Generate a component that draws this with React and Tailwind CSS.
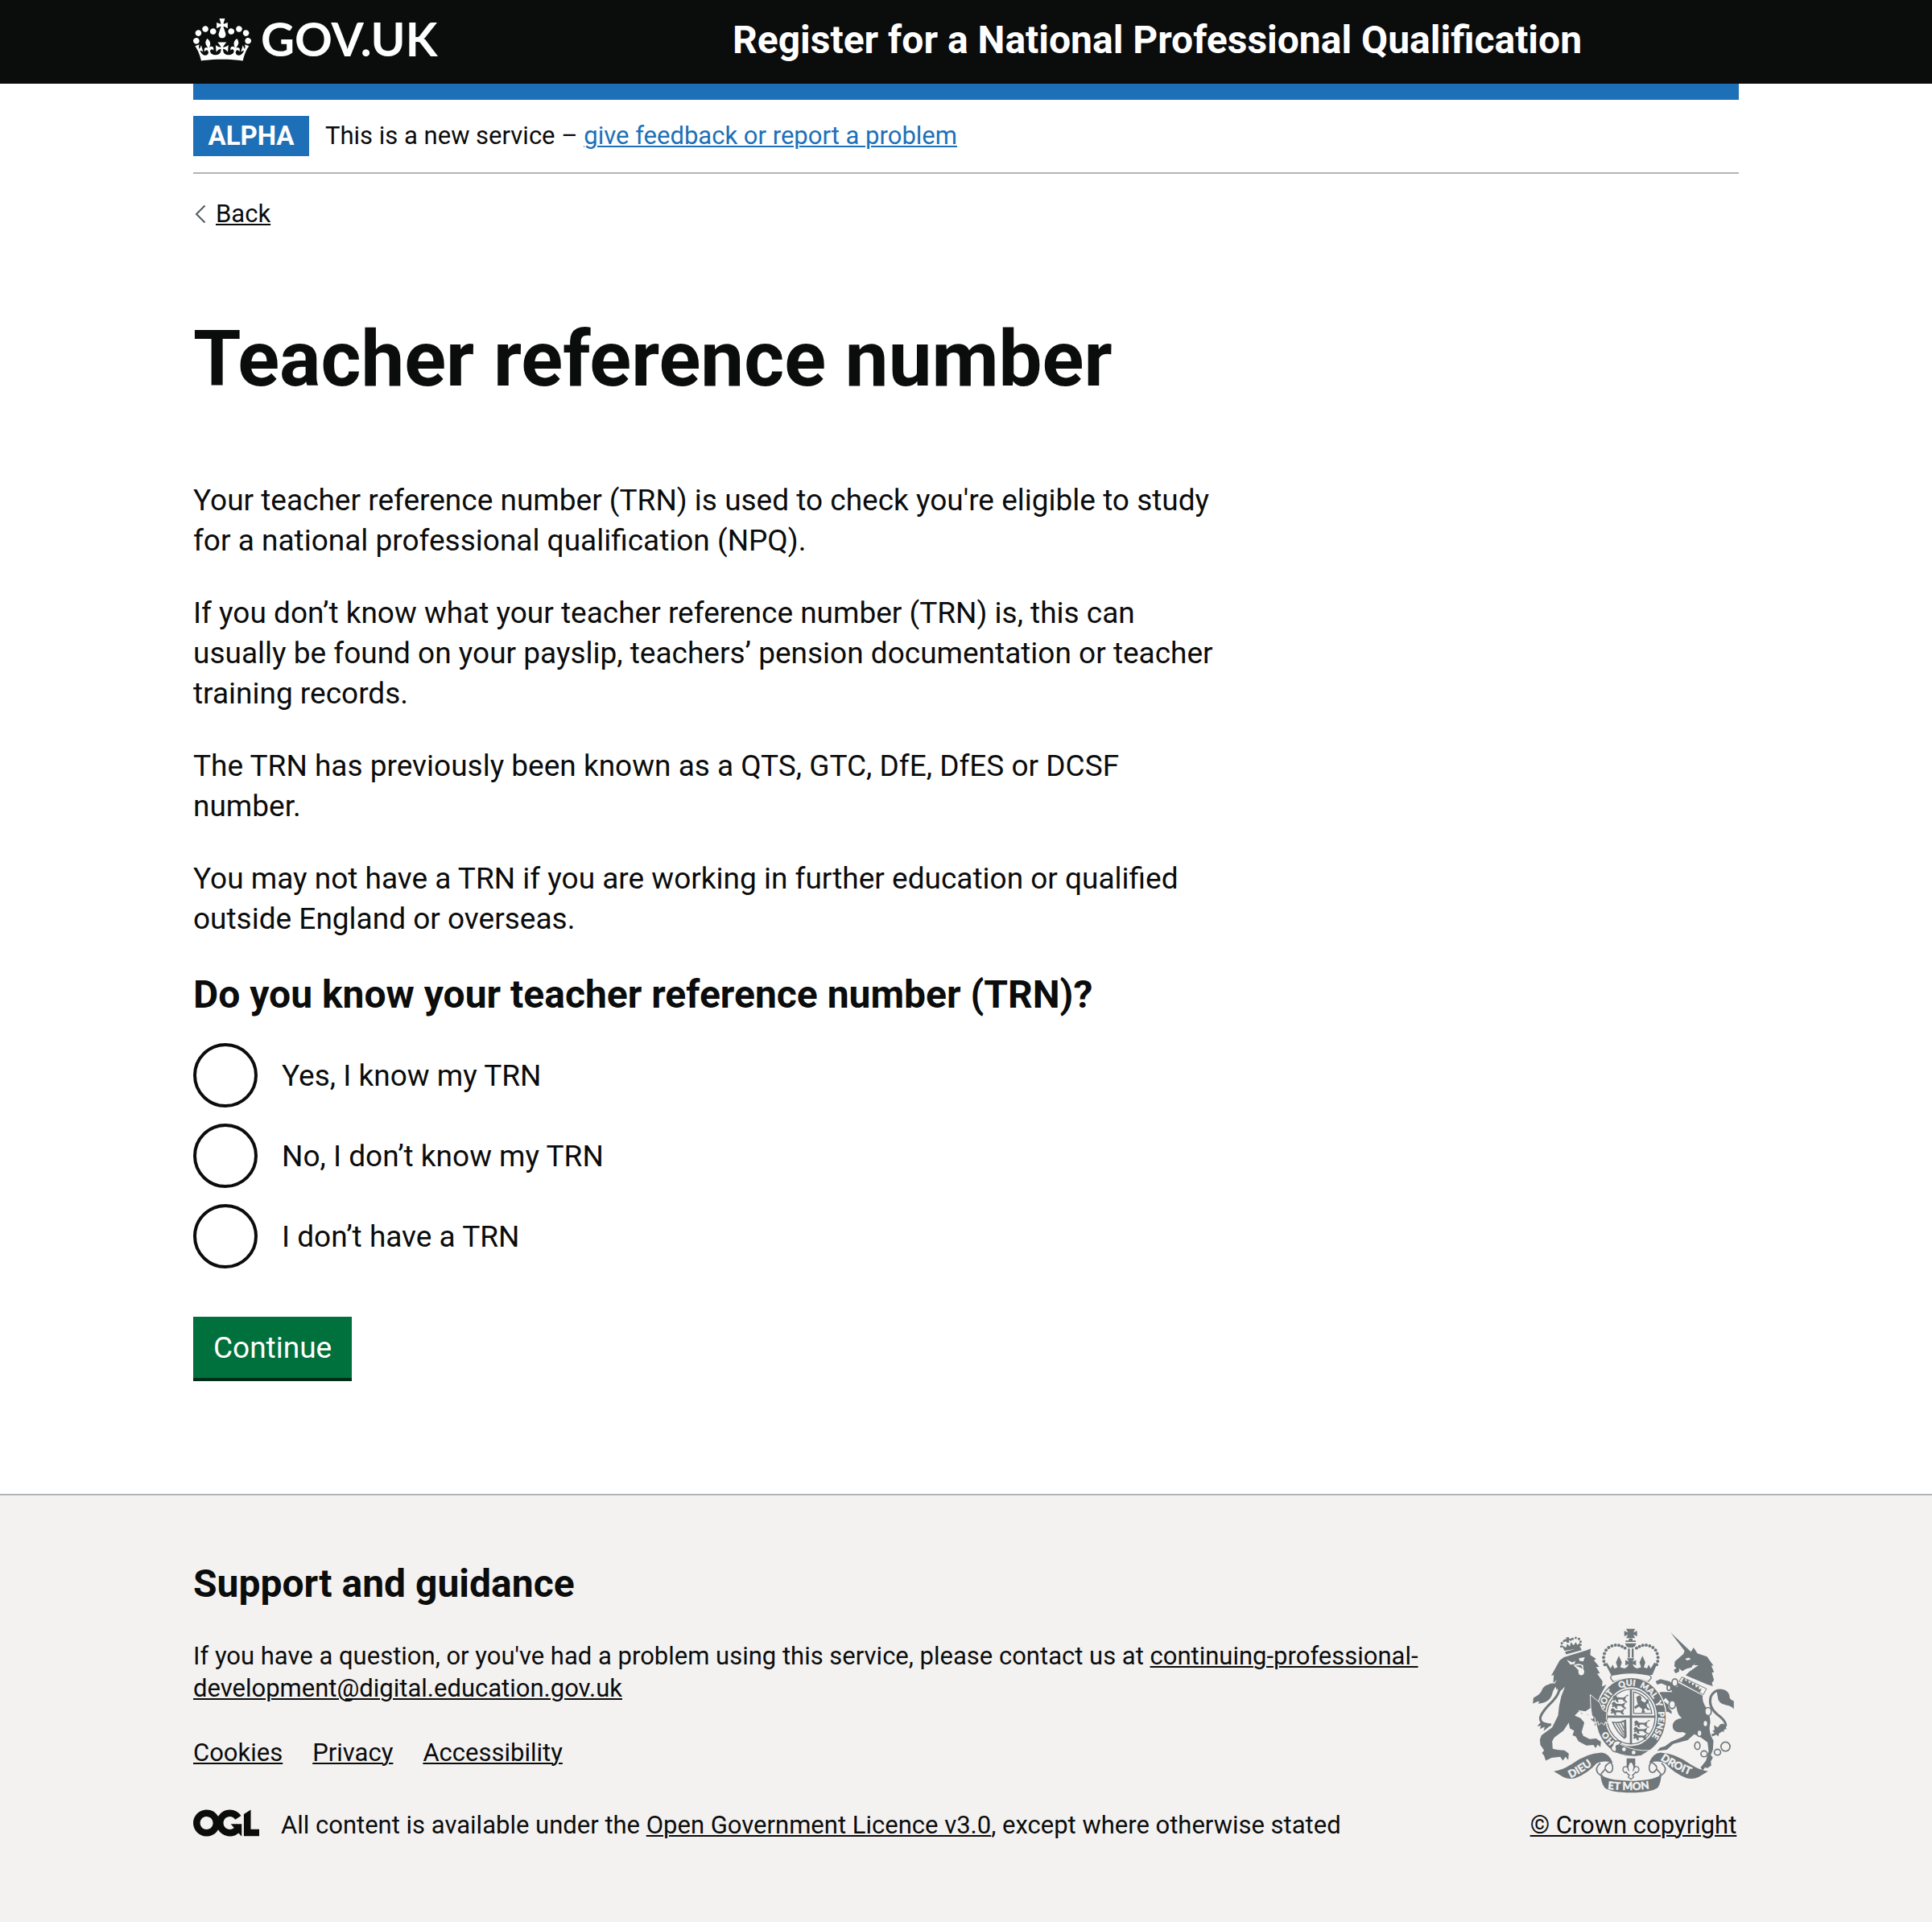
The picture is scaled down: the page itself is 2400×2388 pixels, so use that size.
const paragraphs = [
  "Your teacher reference number (TRN) is used to check you're eligible to study for a national professional qualification (NPQ).",
  "If you don’t know what your teacher reference number (TRN) is, this can usually be found on your payslip, teachers’ pension documentation or teacher training records.",
  "The TRN has previously been known as a QTS, GTC, DfE, DfES or DCSF number.",
  "You may not have a TRN if you are working in further education or qualified outside England or overseas.",
];

const options = [
  { id: "trn-yes", label: "Yes, I know my TRN" },
  { id: "trn-no-dont-know", label: "No, I don’t know my TRN" },
  { id: "trn-no-dont-have", label: "I don’t have a TRN" },
];

function Container({ className = "", children }) {
  return <div className={`mx-auto w-4/5 max-w-[1920px] ${className}`}>{children}</div>;
}

function TextLink({ className = "", children }) {
  return (
    <a href="#" className={`underline decoration-2 underline-offset-2 ${className}`}>
      {children}
    </a>
  );
}

function Crown() {
  return (
    <svg viewBox="0 0 132 97" className="h-[53px] w-[72px] shrink-0" fill="currentColor" aria-hidden="true">
      <path
        fillRule="evenodd"
        d="M25 30.2c3.5 1.5 7.7-.2 9.1-3.7 1.5-3.6-.2-7.8-3.9-9.2-3.6-1.4-7.6.3-9.1 3.9-1.4 3.5.3 7.5 3.9 9zM9 39.5c3.6 1.5 7.8-.2 9.2-3.7 1.5-3.6-.2-7.8-3.9-9.1-3.6-1.5-7.6.2-9.1 3.8-1.4 3.5.3 7.5 3.8 9zM4.4 57.2c3.5 1.5 7.7-.2 9.1-3.8 1.5-3.6-.2-7.7-3.9-9.1-3.5-1.5-7.6.3-9.1 3.8-1.4 3.5.3 7.6 3.9 9.1zm38.3-21.4c3.5 1.5 7.7-.2 9.1-3.8 1.5-3.6-.2-7.7-3.9-9.1-3.6-1.5-7.6.3-9.1 3.8-1.3 3.6.4 7.7 3.9 9.1zm64.4-5.6c-3.6 1.5-7.8-.2-9.1-3.7-1.5-3.6.2-7.8 3.8-9.2 3.6-1.4 7.7.3 9.2 3.9 1.3 3.5-.4 7.5-3.9 9zm15.9 9.3c-3.6 1.5-7.7-.2-9.1-3.7-1.5-3.6.2-7.8 3.7-9.1 3.6-1.5 7.7.2 9.2 3.8 1.5 3.5-.3 7.5-3.8 9zm4.7 17.7c-3.6 1.5-7.8-.2-9.2-3.8-1.5-3.6.2-7.7 3.9-9.1 3.6-1.5 7.7.3 9.2 3.8 1.3 3.5-.4 7.6-3.9 9.1zM89.3 35.8c-3.6 1.5-7.8-.2-9.2-3.8-1.4-3.6.2-7.7 3.9-9.1 3.6-1.5 7.7.3 9.2 3.8 1.4 3.6-.3 7.7-3.9 9.1zM69.7 17.7l8.9 4.7V9.3l-8.9 2.8c-.2-.3-.5-.6-.9-.9L72.4 0H59.6l3.5 11.2c-.3.3-.6.5-.9.9l-8.8-2.8v13.1l8.8-4.7c.3.3.6.7.9.9l-5 15.4v.1c-.2.8-.4 1.6-.4 2.4 0 4.1 3.1 7.5 7 8.1h.2c.3 0 .7.1 1 .1.4 0 .7 0 1-.1h.2c4-.6 7.1-4.1 7.1-8.1 0-.8-.1-1.7-.4-2.4V34l-5.1-15.4c.4-.2.7-.6 1-.9zM66 92.8c16.9 0 32.8 1.1 47.1 3.2 4-16.9 8.9-26.7 14-33.5l-9.6-3.4c1 4.9 1.1 7.2 0 10.2-1.5-1.4-3-4.3-4.2-8.7L108.6 76c2.8-2 5-3.2 7.5-3.3-4.4 9.4-10 11.9-13.6 11.2-4.3-.8-6.3-4.6-5.6-7.9 1-4.7 5.7-5.9 8-.5 4.3-8.7-3-11.4-7.6-8.8 7.1-7.2 7.9-13.5 2.1-21.1-8 6.1-8.1 12.3-4.5 20.8-4.7-5.4-12.1-2.5-9.5 6.2 3.4-5.2 7.9-2 7.2 3.1-.6 4.3-6.4 7.8-13.5 7.2-10.3-.9-10.9-8-11.2-13.8 2.5-.5 7.1 1.8 11 7.3L80.2 60c-4.1 4.4-8 5.3-12.3 5.4 1.4-4.4 8-11.6 8-11.6H55.5s6.4 7.2 7.9 11.6c-4.2-.1-8-1-12.3-5.4l1.4 16.4c3.9-5.5 8.5-7.7 10.9-7.3-.3 5.8-.9 12.8-11.1 13.8-7.2.6-12.9-2.9-13.5-7.2-.7-5 3.8-8.3 7.1-3.1 2.7-8.7-4.6-11.6-9.4-6.2 3.7-8.5 3.6-14.7-4.6-20.8-5.8 7.6-5 13.9 2.2 21.1-4.7-2.6-11.9.1-7.7 8.8 2.3-5.5 7.1-4.2 8.1.5.7 3.3-1.3 7.1-5.7 7.9-3.5.7-9-1.8-13.5-11.2 2.5.1 4.7 1.3 7.5 3.3l-4.7-15.4c-1.2 4.4-2.7 7.2-4.3 8.7-1.1-3-.9-5.3 0-10.2l-9.5 3.4c5 6.9 9.9 16.7 14 33.5 14.8-2.1 30.8-3.2 47.7-3.2z"
      />
    </svg>
  );
}

function OglLogo() {
  return (
    <svg viewBox="0 0 483.2 195.7" className="h-[34px] w-[82px] shrink-0" fill="currentColor" role="img" aria-label="Open Government Licence">
      <path d="M421.5 142.8V.1l-50.7 32.3v161.1h112.4v-50.7zm-122.3-9.6A47.12 47.12 0 0 1 221 97.8c0-26 21.1-47.1 47.1-47.1 16.7 0 31.4 8.7 39.7 21.8l42.7-27.2A97.63 97.63 0 0 0 268.1 0c-36.5 0-68.3 20.1-85.1 49.7A98 98 0 0 0 97.8 0C43.9 0 0 43.9 0 97.8s43.9 97.8 97.8 97.8c36.5 0 68.3-20.1 85.1-49.7a97.76 97.76 0 0 0 149.6 25.4l19.4 22.2h3v-87.8h-80l24.3 27.5zM97.8 145c-26 0-47.1-21.1-47.1-47.1s21.1-47.1 47.1-47.1 47.1 21.1 47.1 47.1S123.8 145 97.8 145" />
    </svg>
  );
}

const ink = "#6f777b";
const paper = "#f3f2f1";

const crownBeads = [[341, 176], [337, 163], [336, 149], [339, 135], [345, 122], [355, 112], [367, 106], [380, 103], [393, 104], [405, 108], [416, 114]];
const lionCrownBeads = [[178, 108], [180, 96], [188, 88], [198, 86], [220, 80], [232, 76], [244, 80], [250, 90], [250, 102]];

// One of the three lions in each English quarter of the shield.
function Passant({ x, y }) {
  return (
    <path
      transform={`translate(${x} ${y})`}
      d="M0 4l6-4 6 3 3 5 22 1 8-4 6-6 6 0-2 4-6 1-3 7-2 6 5 5-3 3-8-4-4-5-14 0-3 5 4 4-5 2-6-5-2-6-4 5-6-2 4-6-4-4z"
    />
  );
}

function ScrollFold() {
  return (
    <path
      d="M324 544Q302 562 314 580Q320 588 332 590M366 538Q338 550 342 566Q336 574 326 584M342 566Q356 588 368 572Q374 554 362 540"
      fill="none"
      stroke={ink}
      strokeWidth="5"
    />
  );
}

function RoyalArms() {
  return (
    <svg viewBox="72 40 750 616" className="h-[205px] w-[250px]" fill={ink} strokeLinejoin="round" aria-hidden="true">
      <defs>
        <path id="garter" d="M438 486A102 115 0 0 1 336 370A102 115 0 0 1 438 255A102 115 0 0 1 540 370A102 115 0 0 1 438 486" />
        <path id="scroll-left" d="M213 600Q270 574 330 522" />
        <path id="scroll-mid" d="M351 640Q438 651 530 636" />
        <path id="scroll-right" d="M547 530Q600 568 690 600" />
      </defs>

      {/* Imperial crown */}
      <path d="M420 42h34l-7 14 14-6v20l-14-6 7 13h-34l7-13-14 6V50l14 6zM430 78h14v8h12v5h-38v-5h12zM416 96h42q-3 12-12 16h-18q-9-4-12-16zM427 116h7v34h-7zm14 0h7v34h-7zM423 152h28l-7 13 13-6v20l-13-5 9 16h-32l9-16-13 5v-20l13 6z" />
      {crownBeads.map(([x, y]) => (
        <g key={`${x}-${y}`}>
          <circle cx={x} cy={y} r="6" />
          <circle cx={875 - x} cy={y} r="6" />
        </g>
      ))}
      <path d="M348 168l14 22 8-14 6 14 12-4-6-18 11-25 11 25-6 18 16 4 8-4h30l8 4 16-4-6-18 11-25 11 25-6 18 12 4 6-14 8 14 14-22 8 8-16 38H364l-20-38z" />
      <path d="M364 200q74-18 148 0l-4 18q-70-18-140 0z" />
      <path d="M362 226q0-12 14-12 62-14 124 0 12 0 14 12l-12 14q-64-28-130 0z" fill={paper} stroke={ink} strokeWidth="4" />

      {/* Lion */}
      <path d="M172 160l16-12 86-26 14-6-2 24 22 14-8 6 20 24-12 0 14 24-10 2 20 28-2 20 16-8-24 44-8 30 22 60 4 20-10-2-4 10-8-8-6 6-2-10-8 4 2-12-14-10-4-14-22-10-10 2-4-8-12-4 6-6-14-8 28 2-30 30 22 10 14 16-10 36 6 14 24 12 24-2 18 12-2 20-10-10-8 14-8-12-26 2-30-16-10-18-12-4 6-18-16-8-4-22-20 30-34 26-8 14 2 28 16 4 28 2 16 12-2 24-10-12-10 14-10-14-32 4-22 10-6-18-8-10 8-10-14-20-2-20 6-16 40-30 22-44 4-36 8-36 14-36-16 16-10 8 4-26-10 14-6-26 8-12-14 12 2-30-10 4z" />
      <path d="M198 158l22 10 10-6-2 12-16 2zM244 152l22-4-6 16-14-2zM224 178q18-10 36 0-2 12 4 24-2 14-12 14-12-2-10-20zM240 346l28 4 22-14 10 22-4 22-12-6-6-12-14 2-10-8z" fill={paper} />
      <path d="M230 180l22-2 6 14-12-6z" />
      <path d="M140 400Q96 400 100 372Q106 350 148 310Q176 278 168 262Q158 246 134 252" fill="none" stroke={ink} strokeWidth="9" />
      <path d="M160 256Q122 238 106 270Q102 286 74 300L72 322Q84 314 96 312L92 322Q136 318 144 286Q148 266 160 256zM104 388L88 406l14-2-4 12 18-8-4 16 30-24z" />
      <path d="M192 128l58-16 4 10-58 16zM190 124l-10-20 16 8 4-14 10 10 4-16 10 12 8-12 6 10 10-8 0 20zM196 74h12l-2 6 10-2 0 10-10-4 2 10h-10l0-8-8 4v-10l8 2z" />
      {lionCrownBeads.map(([x, y]) => (
        <circle key={`${x}-${y}`} cx={x} cy={y} r="4.5" />
      ))}

      {/* Unicorn */}
      <path d="M586 56l76 72 10-16 14 22 36 12 10 14 14 20-8 0 10 24-8 2 8 28-8 10 4 12-20-6-82-34 28-28 8-18-12 16-22 6-14 8-12-10 0 12-14 6-6-12 10-8-8-6 2-18 32-28 4-12z" />
      <path d="M640 154l14-4 8 6-14 4zM668 178q-6 24-32 38l54-38z" fill={paper} />
      <path d="M628 222l92 44-12 22-90-50z" fill={paper} stroke={ink} strokeWidth="3" />
      <path d="M630 234l8-10 4 14 10-8 2 16 12-8 0 16 12-8 2 16 12-8 0 16 10-6-6 16-68-36z" />
      <path d="M616 244l90 48q-4 22 14 46 20 40 12 66-4 24 14 56l-2 34-8 20 8 8-8 16 2 14-14 10-10-2-8 12-8-12 20-26 10-34-4-34-28-20-22-10-24 22-54 14-24 22-36 4 10-12 20-6 22-16 44-18 12-12-12-6q-42 4-38-30 8-20 34-22-16-14-18-32-2-16-10-24-22-2-32-20l-10 10 20 16 0 10 12 14 0 10-14-8-12 2 0-10-8-4 6-10-24-22-4-20 14-10 44 0-8-18-32-14-16 4-6-12 18-8 34 8 28 22z" />
      <path d="M740 440Q786 424 792 402Q792 384 758 360Q726 332 736 296Q752 264 784 274" fill="none" stroke={ink} strokeWidth="9" />
      <path d="M758 274Q796 258 806 292Q804 306 822 312V342Q812 330 796 328Q762 322 762 296zM784 396l12 22-12-4 2 14-16-8-6 24-22-22 8-2-2-18 14 8 10-12z" />
      <g fill={paper} stroke={ink} strokeWidth="5">
        <ellipse cx="602" cy="243" rx="11" ry="14" />
        <ellipse cx="580" cy="262" rx="7" ry="10" />
        <ellipse cx="592" cy="325" rx="12" ry="15" />
        <ellipse cx="726" cy="351" rx="12" ry="15" />
        <ellipse cx="716" cy="396" rx="9" ry="12" />
        <ellipse cx="694" cy="432" rx="9" ry="12" />
        <ellipse cx="686" cy="479" rx="10" ry="14" />
        <ellipse cx="711" cy="509" rx="12" ry="11" />
        <ellipse cx="761" cy="503" rx="12" ry="11" />
        <circle cx="791" cy="482" r="17" />
      </g>

      {/* Garter */}
      <ellipse cx="438" cy="372" rx="134" ry="150" fill={paper} />
      <ellipse cx="438" cy="372" rx="130" ry="146" />
      <ellipse cx="438" cy="370" rx="97" ry="110" fill={paper} />
      <ellipse cx="438" cy="370" rx="90" ry="102" fill={paper} stroke={ink} strokeWidth="4" />
      <g fontFamily="Lato, sans-serif" fontSize="32" fontWeight="900" fill={paper} stroke={paper} strokeWidth="1">
        <text><textPath href="#garter" startOffset="66">HO</textPath></text>
        <text><textPath href="#garter" startOffset="198">SOIT</textPath></text>
        <text><textPath href="#garter" startOffset="298">QUI</textPath></text>
        <text><textPath href="#garter" startOffset="374">MAL</textPath></text>
        <text><textPath href="#garter" startOffset="456">Y</textPath></text>
        <text><textPath href="#garter" startOffset="494">PENSE</textPath></text>
      </g>
      {/* Lion's forepaw over the garter */}
      <path d="M286 288l36 30 10 26 16 10-2 24 8 16-12-4-4 12-10-10-10 10-4-14-10 6 0-18-12-10-4-30z" stroke={paper} strokeWidth="3" />

      {/* Shield */}
      <path d="M434 270h8v200h-8zM350 366h178v8H350z" />
      <Passant x={372} y={290} />
      <Passant x={368} y={314} />
      <Passant x={364} y={338} />
      <Passant x={452} y={384} />
      <Passant x={450} y={408} />
      <Passant x={448} y={432} />
      <path d="M448 278q56 12 68 80h-68z" fill="none" stroke={ink} strokeWidth="4" />
      <path d="M458 296l14-6 6 10-2 10 14 8 10-14 6 8-10 14 4 10 10 8-10 2-8-8-6 6 6 10-14 2 2-14-12-10-14 10-4-8 14-10-4-14z" />
      <path d="M366 388q26 6 54-8l2 66-8 8q-30-22-48-66zM374 394q14 34 38 52v-56q-20 8-38 4z" fillRule="evenodd" />
      <path d="M382 396l28 44M392 396l20 34M402 393l10 22" stroke={ink} strokeWidth="4" fill="none" />

      {/* Buckle and hanging strap */}
      <path d="M372 462l38 16q46 22 98 18l-32 20q-46 10-108-16z" stroke={paper} strokeWidth="3" />
      <circle cx="412" cy="492" r="7" fill={paper} />
      <circle cx="448" cy="504" r="7" fill={paper} />
      <path d="M374 466q14-12 28 0l-10 10q-14 0-8 14l-2 12q-18-2-18-18 8-6 10-18z" fill={paper} stroke={ink} strokeWidth="4" />

      {/* Fleur-de-lis badge */}
      <path d="M422 526h32v36h-32z" />
      <path d="M438 536q18 18 8 36 4-20 18-14 10 12-4 22-4 0-4-4-6 10-12 12l4 8-10 8-10-8 4-8q-6-2-12-12 0 4-4 4-14-10-4-22 14-6 18 14-10-18 8-36z" fill={paper} stroke={ink} strokeWidth="4" />

      {/* Motto scroll */}
      <path d="M150 574q28-2 66-26 56-42 112-44 28 2 42 38-30-10-60 2-30 36-80 56-24 6-44-4z" />
      <path d="M726 574q-28-2-66-26-56-42-112-44-28 2-42 38 30-10 60 2 30 36 80 56 24 6 44-4z" />
      <ScrollFold />
      <g transform="matrix(-1 0 0 1 876 0)">
        <ScrollFold />
      </g>
      <path d="M324 584q20 24 114 26 94-2 114-26-2 34-14 52-26 18-100 18t-98-18q-14-20-16-52z" />
      <g fontFamily="Lato, sans-serif" fontSize="40" fontWeight="900" fill={paper} stroke={paper} strokeWidth="1">
        <text><textPath href="#scroll-left">DIEU</textPath></text>
        <text><textPath href="#scroll-mid">ET MON</textPath></text>
        <text><textPath href="#scroll-right">DROIT</textPath></text>
      </g>
    </svg>
  );
}

export default function App() {
  return (
    <div className="min-h-screen bg-[#f3f2f1] font-[Roboto,sans-serif] text-[31px] leading-[40px] text-[#0b0c0c]">
      <header className="bg-[#0b0c0c] text-white">
        <Container className="flex h-[104px] items-start">
          <div className="w-1/3 pt-[18px]">
            <a href="#" className="flex items-start gap-3 font-[Lato,sans-serif] text-[58px] leading-[60px] font-bold">
              <span className="pt-[5px]">
                <Crown />
              </span>
              GOV.UK
            </a>
          </div>
          <a href="#" className="pt-5 pl-[30px] text-[48px] leading-[60px] font-bold">
            Register for a National Professional Qualification
          </a>
        </Container>
      </header>

      <div className="bg-white">
        <Container>
          <div className="h-5 bg-[#1d70b8]" />
          <div className="flex items-center gap-5 border-b-2 border-[#b1b4b6] py-5">
            <strong className="flex h-[50px] w-[144px] items-center justify-center bg-[#1d70b8] text-[33px] text-white">ALPHA</strong>
            <p>
              This is a new service – <TextLink className="text-[#1d70b8]">give feedback or report a problem</TextLink>
            </p>
          </div>

          <div className="flex items-center gap-3 pt-[30px]">
            <svg viewBox="0 0 16 24" className="h-6 w-4" fill="none" stroke="#505a5f" strokeWidth="2" aria-hidden="true">
              <path d="M14.5 1.500L4 12l10.500 10.500" />
            </svg>
            <TextLink>Back</TextLink>
          </div>

          <main className="w-2/3 pt-[110px] pb-[140px] text-[37px] leading-[50px]">
            <h1 className="mb-[101px] text-[96px] leading-[100px] font-bold">Teacher reference number</h1>
            <div className="flex flex-col gap-10">
              {paragraphs.map((text) => (
                <p key={text}>{text}</p>
              ))}
            </div>
            <form className="mt-[39px]" onSubmit={(event) => event.preventDefault()}>
              <fieldset>
                <legend className="mb-[30px] text-[48px] leading-[60px] font-bold">Do you know your teacher reference number (TRN)?</legend>
                <div className="flex flex-col gap-5">
                  {options.map(({ id, label }) => (
                    <div key={id} className="flex items-center">
                      <input
                        type="radio"
                        id={id}
                        name="trn-knowledge"
                        className="size-20 shrink-0 appearance-none rounded-full border-4 border-[#0b0c0c] bg-white checked:bg-[#0b0c0c] checked:shadow-[inset_0_0_0_16px_white]"
                      />
                      <label htmlFor={id} className="pt-[2px] pl-[30px]">
                        {label}
                      </label>
                    </div>
                  ))}
                </div>
              </fieldset>
              <button type="submit" className="mt-[60px] mb-1 block h-[76px] bg-[#00703c] px-[25px] pt-[2px] text-white shadow-[0_4px_0_#002d18]">
                Continue
              </button>
            </form>
          </main>
        </Container>
      </div>

      <footer className="border-t-2 border-[#b1b4b6]">
        <Container className="flex items-end pt-20 pb-[100px]">
          <div className="flex-1 pr-[30px]">
            <h2 className="mb-10 text-[48px] leading-[60px] font-bold">Support and guidance</h2>
            <p className="mb-10">
              If you have a question, or you've had a problem using this service, please contact us at{" "}
              <TextLink>continuing-professional-development@digital.education.gov.uk</TextLink>
            </p>
            <ul className="mb-[50px] flex gap-[37px]">
              <li><TextLink>Cookies</TextLink></li>
              <li><TextLink>Privacy</TextLink></li>
              <li><TextLink>Accessibility</TextLink></li>
            </ul>
            <div className="flex items-start gap-[27px]">
              <OglLogo />
              <p>
                All content is available under the <TextLink>Open Government Licence v3.0</TextLink>, except where otherwise stated
              </p>
            </div>
          </div>
          <a href="#" className="flex w-[262px] flex-col items-center gap-5 underline decoration-2 underline-offset-2">
            <RoyalArms />
            © Crown copyright
          </a>
        </Container>
      </footer>
    </div>
  );
}
